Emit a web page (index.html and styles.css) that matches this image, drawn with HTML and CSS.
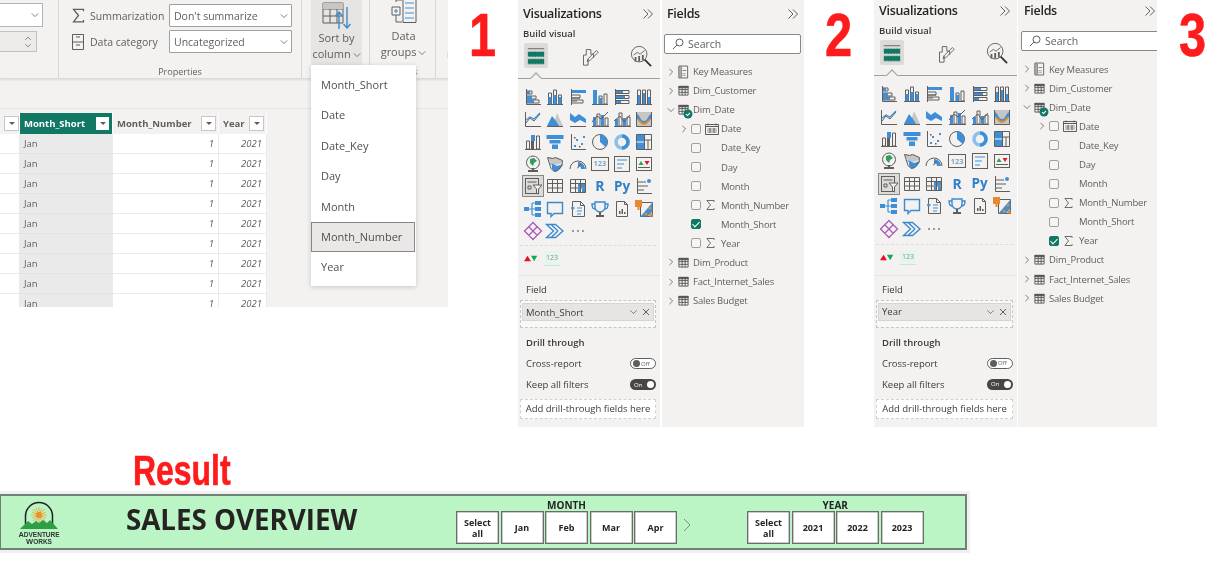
FILE: index.html
```html
<!DOCTYPE html>
<html lang="en">
<head>
<meta charset="utf-8">
<title>Sort by column</title>
<link rel="stylesheet" href="styles.css">
</head>
<body>
<svg class="defs" aria-hidden="true">
  <symbol id="i1" viewBox="0 0 20 20"><path class="l" d="M3.5 2v15.5H18"/><path class="l" d="M4 4h5v3H4M4 9h9v3H4M4 13h12v3H4"/><path class="b" d="M4 4h3v3H4zM4 9h5v3H4zM4 13h7v3H4z"/></symbol>
  <symbol id="i2" viewBox="0 0 20 20"><path class="l" d="M2 17.500h16M3.500 6h3v11h-3zM8.500 3h3v14h-3zM13.500 8h3v9h-3z"/><path class="b" d="M8.500 8h3v9h-3zM13.500 10h3v7h-3zM3.500 10h3v7h-3z"/></symbol>
  <symbol id="i3" viewBox="0 0 20 20"><path class="l" d="M3.500 2v16M4 8h8v3H4M4 13h11v3H4"/><path class="b" d="M4 3h14v3H4z"/><path class="l" d="M4 11h8M4 14h5"/></symbol>
  <symbol id="i4" viewBox="0 0 20 20"><path class="l" d="M2 17.500h16M9 9h3v8H9zM14 7h3v10h-3z"/><path class="b" d="M3 3h4v14H3zM9 11h3v6H9z"/></symbol>
  <symbol id="i5" viewBox="0 0 20 20"><path class="l" d="M3.500 2v16M4 3.500h13v3H4zM4 8.500h13v3H4zM4 13.500h13v3H4z"/><path class="b" d="M4 4h7v2H4zM4 9h9v2H4zM4 14h5v2H4z"/></symbol>
  <symbol id="i6" viewBox="0 0 20 20"><path class="l" d="M2 17.500h16M3.500 3h3v14h-3zM8.500 3h3v14h-3zM13.500 3h3v14h-3z"/><path class="b" d="M4 8h2v9H4zM9 6h2v11H9zM14 10h2v7h-2z"/></symbol>
  <symbol id="i7" viewBox="0 0 20 20"><path class="l" d="M2.500 3v14.500H18M3 14l4-5 4 3 6-7"/><path class="lb" d="M3 11l4-3 4 2 6-6"/></symbol>
  <symbol id="i8" viewBox="0 0 20 20"><path class="k2" d="M8 17l4-13 6 13z"/><path class="b" d="M2 17l5-10 4 5 3 5z"/><path class="l" d="M2 17.500h16"/></symbol>
  <symbol id="i9" viewBox="0 0 20 20"><path class="b" d="M2 4l5 4 4-3 7 5v4l-6-3-5 3-5-3z"/><path class="l" d="M2 17.500h16"/></symbol>
  <symbol id="i10" viewBox="0 0 20 20"><path class="b" d="M3 8h3v9H3zM11 6h3v11h-3z"/><path class="l" d="M7 5h3v12H7zM15 9h3v8h-3zM2 17.500h17M2 13l5-6 4 3 7-7"/></symbol>
  <symbol id="i11" viewBox="0 0 20 20"><path class="b" d="M3 10h3v7H3zM11 9h3v8h-3z"/><path class="l" d="M7 4h3v13H7zM15 8h3v9h-3zM2 17.500h17M2 12l6-5 4 6 6-7"/></symbol>
  <symbol id="i12" viewBox="0 0 20 20"><path class="k2" d="M2 3h16v15H2z"/><path class="b" d="M2 5c4 0 4 7 8 7s4-7 8-7v5c-4 0-4 5-8 5s-4-5-8-5z"/><path class="or" d="M4 10c3 1 4 4 6 4s3-3 6-4v2c-2 1-3 4-6 4s-4-3-6-4z"/><path class="l" d="M2.500 3v14.500h15V3"/></symbol>
  <symbol id="i13" viewBox="0 0 20 20"><path class="l" d="M2 17.500h16M3.500 9h3v8h-3zM13.500 4h3v13h-3z"/><path class="b" d="M8 3h4v6H8z"/><path class="k" d="M8 9h3v8H8z"/></symbol>
  <symbol id="i14" viewBox="0 0 20 20"><path class="b" d="M1.500 3h17v4h-17zM4.500 8h11v3.500h-11zM7 12.500h6V17H7z"/></symbol>
  <symbol id="i15" viewBox="0 0 20 20"><path class="l" d="M3.500 2v15.500H18"/><path class="b" d="M6 13h2v2H6zM8 7h2v2H8zM13 11h2v2h-2zM15 4h2v2h-2z"/><path class="k" d="M6 5h1.500v1.500H6zM11 14h1.500v1.500H11z"/></symbol>
  <symbol id="i16" viewBox="0 0 20 20"><circle class="l" cx="10" cy="10" r="7.500"/><path class="b" d="M10 2.500A7.500 7.500 0 0 1 15.500 15L10 10z"/></symbol>
  <symbol id="i17" viewBox="0 0 20 20"><circle class="dn" cx="10" cy="10" r="6"/><path class="dn2" d="M10 4a6 6 0 0 1 0 12"/></symbol>
  <symbol id="i18" viewBox="0 0 20 20"><path class="b" d="M2 3h8v14H2z"/><path class="l" d="M2.500 2.500h15v15h-15zM10.500 3v14M10.500 8h7M14 8v9"/><path class="w" d="M2.500 10h7.500"/></symbol>
  <symbol id="i19" viewBox="0 0 20 20"><circle class="l" cx="10" cy="8.500" r="6.500"/><path class="gn" d="M7 5l4-1 3 3-3 2-1 3-3-3z"/><path class="k" d="M5 16h10v2H5z"/><path class="k" d="M9 14h2v3H9z"/></symbol>
  <symbol id="i20" viewBox="0 0 20 20"><path class="k2" d="M3 3l5 1 3-1 6 3v3l-6 2-4-1-3-3z"/><path class="b" d="M3 9l4 2v4l3 3 5-3 3-5-6 2-4-2z"/><path class="l" d="M2.500 3.500l5 1 3-1 7 3-.5 5-4 5-4 1-3-3z"/></symbol>
  <symbol id="i21" viewBox="0 0 20 20"><path class="l" d="M2 15a8 8 0 0 1 16 0"/><path class="b" d="M10 8a7 7 0 0 1 7 7h-4a3 3 0 0 0-3-3z"/><path class="k" d="M9 14l3-4 .8.700-3 3.800z"/></symbol>
  <symbol id="i23" viewBox="0 0 20 20"><rect class="l" x="2.500" y="2.500" width="15" height="15"/><path class="lb" d="M5 6h10M5 10h7M5 14h5"/></symbol>
  <symbol id="i24" viewBox="0 0 20 20"><rect class="l" x="2.500" y="3.500" width="15" height="13"/><path class="gn" d="M4.500 11l2.500-4 2.500 4z"/><path class="rd" d="M10.500 7h5L13 11z"/><path class="l" d="M4 13.500h12"/></symbol>
  <symbol id="i25" viewBox="0 0 20 20"><rect class="l" x="2.500" y="2.500" width="13" height="15"/><path class="l" d="M4.500 6h9M5 10h3v3H5z"/><path class="sl" d="M10 9h9l-3.500 4v5l-2-1v-4z"/></symbol>
  <symbol id="i26" viewBox="0 0 20 20"><path class="l" d="M2.500 3.500h15v13h-15zM2.500 7.500h15M2.500 12h15M7.500 3.500v13M12.500 3.500v13"/></symbol>
  <symbol id="i27" viewBox="0 0 20 20"><path class="b" d="M10 8h7.500v3.500H10zM10 12.500h3v4h-3zM14 12.500h3.500v4H14z"/><path class="l" d="M2.500 3.500h15v13h-15zM2.500 7.500h15M2.500 12h15M7.500 3.500v13M12.500 3.500v13"/></symbol>
  <symbol id="i30" viewBox="0 0 20 20"><path class="l" d="M3.500 2v15.500H18M4 6h8M4 10h10M4 14h6"/><circle class="b" cx="15" cy="5" r="2"/></symbol>
  <symbol id="i31" viewBox="0 0 20 20"><path class="b" d="M1 8h5v4H1zM12 2h6v4h-6zM12 8h6v4h-6zM12 14h6v4h-6z"/><path class="lb" d="M6 10h6M9 4v12M9 4h3M9 16h3"/></symbol>
  <symbol id="i32" viewBox="0 0 20 20"><path class="lb2" d="M2.500 3.500h15v11H9l-3 3v-3H2.500z"/></symbol>
  <symbol id="i33" viewBox="0 0 20 20"><path class="l" d="M4.500 2.500h8l4 4v11h-12zM12.500 2.500v4h4"/><path class="lb" d="M6 9h1M9 9h5M9 12h5M9 15h4"/><circle class="b" cx="4.500" cy="9" r="1.500"/></symbol>
  <symbol id="i34" viewBox="0 0 20 20"><path class="lb2" d="M5 3h10v5a5 5 0 0 1-10 0zM5 5H2c0 3 1 5 3 5M15 5h3c0 3-1 5-3 5"/><path class="k" d="M9 13h2v3H9zM6 16h8v2H6z"/></symbol>
  <symbol id="i35" viewBox="0 0 20 20"><path class="l" d="M4.500 2.500h8l3 3v12h-11zM12.500 2.500v3h3"/><path class="k" d="M7 12h1.500v3H7zM9.500 10H11v5H9.500zM12 13h1.500v2H12z"/></symbol>
  <symbol id="i36" viewBox="0 0 20 20"><path class="l" d="M6.500 3.500h12v14h-12z"/><path class="b" d="M6.500 17.500l12-14v9l-5 5z"/><path class="or" d="M1 1h7v7H5.500v3h-2V8H1z"/><circle class="or" cx="16" cy="9" r="1.600"/><circle class="or" cx="12" cy="15" r="1.600"/><circle class="or" cx="17" cy="16" r="1.800"/></symbol>
  <symbol id="i37" viewBox="0 0 20 20"><path class="lp" d="M10 1.500l4.200 4.200L10 10 5.800 5.700zM10 10l4.200-4.300 4.300 4.300-4.300 4.300zM10 10l4.200 4.300L10 18.500l-4.200-4.200zM10 10l-4.200 4.300L1.500 10l4.300-4.300z"/></symbol>
  <symbol id="i38" viewBox="0 0 20 20"><path class="lb2" d="M1.500 3.500h9l7.500 6.500-7.500 6.500h-9l7-6.500zM6 3.500l7 6.500M6 16.500l7-6.500"/></symbol>
  <symbol id="i39" viewBox="0 0 20 20"><circle class="kk" cx="5" cy="10" r="1"/><circle class="kk" cx="10" cy="10" r="1"/><circle class="kk" cx="15" cy="10" r="1"/></symbol>
  <symbol id="chev" viewBox="0 0 10 10"><path class="l" d="M3 1l4 4-4 4"/></symbol>
  <symbol id="chevd" viewBox="0 0 10 10"><path class="l" d="M1 3l4 4 4-4"/></symbol>
  <symbol id="dbl" viewBox="0 0 12 10"><path class="l" d="M1.500 .5L6 5 1.500 9.500M6 .5L10.500 5 6 9.500"/></symbol>
  <symbol id="tb" viewBox="0 0 12 12"><path class="k" d="M.5 1h11v2.500H.5z"/><path class="lz" d="M1 1.500h10v9.500H1zM1 5h10M1 8h10M4.500 2v9M7.800 2v9"/></symbol>
  <symbol id="km" viewBox="0 0 12 14"><path class="k2" d="M.5 1h3v12h-3z"/><path class="l" d="M1 .5h9.500v13H1zM3.500 1v12"/><path class="k" d="M5 5h4v1H5zM5 8h1v1H5zM7 8h1v1H7zM5 10h1v1H5zM7 10h1v1H7z"/></symbol>
  <symbol id="cal" viewBox="0 0 14 12"><path class="l" d="M.5 1.500h13v10H.5zM.5 3.500h13"/><path class="k2" d="M2 5h10v5H2z"/><path class="l" d="M5 5v5M9 5v5M3 .5v2M11 .5v2"/></symbol>
  <symbol id="sg" viewBox="0 0 10 12"><path class="l" d="M9 2.500V1H1l4 5-4 5h8V9.500"/></symbol>
  <symbol id="mag" viewBox="0 0 12 12"><circle class="l" cx="7.500" cy="4.500" r="3.500"/><path class="l" d="M5 7l-4 4"/></symbol>
  <symbol id="x" viewBox="0 0 8 8"><path class="l" d="M1 1l6 6M7 1L1 7"/></symbol>
  <symbol id="tabFields" viewBox="0 0 22 22"><path class="l" d="M2 3h18"/><path class="gr" d="M2 6h18v6H2zM2 14h18v6H2z"/><path class="dots" d="M2 6h18M2 12h18M2 14h18M2 20h18"/></symbol>
  <symbol id="tabFormat" viewBox="0 0 24 24"><path class="l" d="M6 11V22h5v-7M6 11h3V5h5v5h3v4M11 15l9-9 2 2-9 9-3 1z"/></symbol>
  <symbol id="tabAnalytics" viewBox="0 0 24 24"><circle class="l" cx="10" cy="10" r="8.500"/><path class="lk" d="M16 16l7 7"/><path class="l" d="M4 11l4-3 3 2 5-4"/><path class="k" d="M5 13h2v5H5zM9 12h2v6H9zM13 11h2v6h-2z"/></symbol>
</svg>

<main class="canvas">

  <section class="shot ribbonshot">
    <div class="ribbon">
      <div class="rib-left">
        <div class="rselect"><svg class="tiny"><use href="#chevd"/></svg></div>
        <div class="spinner"><svg class="tiny up"><use href="#chevd"/></svg><svg class="tiny"><use href="#chevd"/></svg></div>
      </div>
      <div class="rib-props">
        <div class="props-grid">
          <svg class="ic-sigma"><use href="#sg"/></svg><span>Summarization</span>
          <div class="sel">Don't summarize<svg class="tiny"><use href="#chevd"/></svg></div>
          <svg class="ic-cat" viewBox="0 0 12 16"><path class="l" d="M.5.500h11v15H.5zM.5 8h11M4 3h4M4 11h4"/></svg><span>Data category</span>
          <div class="sel">Uncategorized<svg class="tiny"><use href="#chevd"/></svg></div>
        </div>
        <div class="group-label">Properties</div>
      </div>
      <div class="rib-sort">
        <div class="bigbtn hot">
          <svg class="big" viewBox="0 0 30 28"><path class="l" d="M1 1h20v20H1zM1 7h20M1 14h20M8 1v20M15 1v20"/><path class="k2" d="M1 1h20v6H1z"/><path class="lb2" d="M17 27V10M13.500 14L17 10l3.500 4M25 5v21M21.500 22l3.500 4 3.500-4"/></svg>
          <span>Sort by</span><span>column <svg class="tiny in"><use href="#chevd"/></svg></span>
        </div>
      </div>
      <div class="rib-groups">
        <div class="bigbtn">
          <svg class="big g" viewBox="0 0 28 25"><path class="l" d="M2 8h8v8H2zM6 3V1h6M6 16v7h6M13 .5h13v23H13z"/><path class="lb" d="M4 12h4M6 10v4M15 4h9M15 9h9M15 14h9M15 19h9"/></svg>
          <span>Data</span><span>groups <svg class="tiny in"><use href="#chevd"/></svg></span>
        </div>
        <div class="group-label cut">s</div>
      </div>
      <div class="rib-rest"><span class="cutchar">r</span></div>
    </div>
    <div class="subbar"></div>
    <table class="grid-table">
      <colgroup><col class="c0"><col class="c1"><col class="c2"><col class="c3"></colgroup>
      <thead>
        <tr><th><div class="th"><span></span><i class="flt"></i></div></th><th class="active"><div class="th"><span>Month_Short</span><i class="flt"></i></div></th><th><div class="th"><span>Month_Number</span><i class="flt"></i></div></th><th><div class="th"><span>Year</span><i class="flt"></i></div></th></tr>
      </thead>
      <tbody>
        <tr><td></td><td class="m">Jan</td><td class="n">1</td><td class="n">2021</td></tr>
        <tr><td></td><td class="m">Jan</td><td class="n">1</td><td class="n">2021</td></tr>
        <tr><td></td><td class="m">Jan</td><td class="n">1</td><td class="n">2021</td></tr>
        <tr><td></td><td class="m">Jan</td><td class="n">1</td><td class="n">2021</td></tr>
        <tr><td></td><td class="m">Jan</td><td class="n">1</td><td class="n">2021</td></tr>
        <tr><td></td><td class="m">Jan</td><td class="n">1</td><td class="n">2021</td></tr>
        <tr><td></td><td class="m">Jan</td><td class="n">1</td><td class="n">2021</td></tr>
        <tr><td></td><td class="m">Jan</td><td class="n">1</td><td class="n">2021</td></tr>
        <tr><td></td><td class="m">Jan</td><td class="n">1</td><td class="n">2021</td></tr>
      </tbody>
    </table>
    <ul class="menu">
      <li>Month_Short</li><li>Date</li><li>Date_Key</li><li>Day</li><li>Month</li><li class="hover">Month_Number</li><li>Year</li>
    </ul>
  </section>

  <div class="bignum n1">1</div>

  <section class="shot viz v1">
    <div class="ptitle"><span>Visualizations</span><svg class="dbl"><use href="#dbl"/></svg></div>
    <div class="psub">Build visual</div>
    <div class="tabs"><span class="tab on"><svg><use href="#tabFields"/></svg></span><svg class="tab2"><use href="#tabFormat"/></svg><svg class="tab3"><use href="#tabAnalytics"/></svg></div>
    <div class="tabline"></div>
    <div class="vgrid">
      <svg><use href="#i1"/></svg><svg><use href="#i2"/></svg><svg><use href="#i3"/></svg><svg><use href="#i4"/></svg><svg><use href="#i5"/></svg><svg><use href="#i6"/></svg>
      <svg><use href="#i7"/></svg><svg><use href="#i8"/></svg><svg><use href="#i9"/></svg><svg><use href="#i10"/></svg><svg><use href="#i11"/></svg><svg><use href="#i12"/></svg>
      <svg><use href="#i13"/></svg><svg><use href="#i14"/></svg><svg><use href="#i15"/></svg><svg><use href="#i16"/></svg><svg><use href="#i17"/></svg><svg><use href="#i18"/></svg>
      <svg><use href="#i19"/></svg><svg><use href="#i20"/></svg><svg><use href="#i21"/></svg><span class="gl card">123</span><svg><use href="#i23"/></svg><svg><use href="#i24"/></svg>
      <svg class="picked"><use href="#i25"/></svg><svg><use href="#i26"/></svg><svg><use href="#i27"/></svg><span class="gl r">R</span><span class="gl py">Py</span><svg><use href="#i30"/></svg>
      <svg><use href="#i31"/></svg><svg><use href="#i32"/></svg><svg><use href="#i33"/></svg><svg><use href="#i34"/></svg><svg><use href="#i35"/></svg><svg><use href="#i36"/></svg>
      <svg><use href="#i37"/></svg><svg><use href="#i38"/></svg><svg><use href="#i39"/></svg>
    </div>
    <div class="dashline"></div>
    <div class="custom">
      <svg viewBox="0 0 20 12" class="av"><path class="rd" d="M0 10l5-8 5 8z"/><path class="gn2" d="M10 2h9l-4.500 8z"/></svg>
      <span class="num123">123</span>
    </div>
    <div class="hline"></div>
    <div class="flabel">Field</div>
    <div class="dropzone"><div class="pill"><span>Month_Short</span><svg class="pchev"><use href="#chevd"/></svg><svg class="px"><use href="#x"/></svg></div></div>
    <div class="drill">Drill through</div>
    <div class="togrow"><span>Cross-report</span><span class="tog off"><b></b>Off</span></div>
    <div class="togrow"><span>Keep all filters</span><span class="tog on">On<b></b></span></div>
    <div class="addbox">Add drill-through fields here</div>
  </section>

  <section class="shot fields f1">
    <div class="ptitle"><span>Fields</span><svg class="dbl"><use href="#dbl"/></svg></div>
    <div class="search"><svg class="mag"><use href="#mag"/></svg>Search</div>
    <ul class="tree">
      <li class="top"><svg class="cv"><use href="#chev"/></svg><svg class="ti tall"><use href="#km"/></svg>Key Measures</li>
      <li class="top"><svg class="cv"><use href="#chev"/></svg><svg class="ti"><use href="#tb"/></svg>Dim_Customer</li>
      <li class="top"><svg class="cv"><use href="#chevd"/></svg><span class="tiw"><svg class="ti"><use href="#tb"/></svg><svg class="badge" viewBox="0 0 10 10"><circle cx="5" cy="5" r="4.500"/><path d="M3 5.200l1.500 1.300L7 3.800"/></svg></span>Dim_Date</li>
      <li class="sub"><svg class="cv"><use href="#chev"/></svg><i class="cb"></i><svg class="fi cal"><use href="#cal"/></svg>Date</li>
      <li class="sub"><span class="cv"></span><i class="cb"></i><span class="fi"></span>Date_Key</li>
      <li class="sub"><span class="cv"></span><i class="cb"></i><span class="fi"></span>Day</li>
      <li class="sub"><span class="cv"></span><i class="cb"></i><span class="fi"></span>Month</li>
      <li class="sub"><span class="cv"></span><i class="cb"></i><svg class="fi sg"><use href="#sg"/></svg>Month_Number</li>
      <li class="sub"><span class="cv"></span><i class="cb chk"></i><span class="fi"></span>Month_Short</li>
      <li class="sub"><span class="cv"></span><i class="cb"></i><svg class="fi sg"><use href="#sg"/></svg>Year</li>
      <li class="top"><svg class="cv"><use href="#chev"/></svg><svg class="ti"><use href="#tb"/></svg>Dim_Product</li>
      <li class="top"><svg class="cv"><use href="#chev"/></svg><svg class="ti"><use href="#tb"/></svg>Fact_Internet_Sales</li>
      <li class="top"><svg class="cv"><use href="#chev"/></svg><svg class="ti"><use href="#tb"/></svg>Sales Budget</li>
    </ul>
  </section>

  <div class="bignum n2">2</div>

  <section class="shot viz v2">
    <div class="ptitle"><span>Visualizations</span><svg class="dbl"><use href="#dbl"/></svg></div>
    <div class="psub">Build visual</div>
    <div class="tabs"><span class="tab on"><svg><use href="#tabFields"/></svg></span><svg class="tab2"><use href="#tabFormat"/></svg><svg class="tab3"><use href="#tabAnalytics"/></svg></div>
    <div class="tabline"></div>
    <div class="vgrid">
      <svg><use href="#i1"/></svg><svg><use href="#i2"/></svg><svg><use href="#i3"/></svg><svg><use href="#i4"/></svg><svg><use href="#i5"/></svg><svg><use href="#i6"/></svg>
      <svg><use href="#i7"/></svg><svg><use href="#i8"/></svg><svg><use href="#i9"/></svg><svg><use href="#i10"/></svg><svg><use href="#i11"/></svg><svg><use href="#i12"/></svg>
      <svg><use href="#i13"/></svg><svg><use href="#i14"/></svg><svg><use href="#i15"/></svg><svg><use href="#i16"/></svg><svg><use href="#i17"/></svg><svg><use href="#i18"/></svg>
      <svg><use href="#i19"/></svg><svg><use href="#i20"/></svg><svg><use href="#i21"/></svg><span class="gl card">123</span><svg><use href="#i23"/></svg><svg><use href="#i24"/></svg>
      <svg class="picked"><use href="#i25"/></svg><svg><use href="#i26"/></svg><svg><use href="#i27"/></svg><span class="gl r">R</span><span class="gl py">Py</span><svg><use href="#i30"/></svg>
      <svg><use href="#i31"/></svg><svg><use href="#i32"/></svg><svg><use href="#i33"/></svg><svg><use href="#i34"/></svg><svg><use href="#i35"/></svg><svg><use href="#i36"/></svg>
      <svg><use href="#i37"/></svg><svg><use href="#i38"/></svg><svg><use href="#i39"/></svg>
    </div>
    <div class="dashline"></div>
    <div class="custom">
      <svg viewBox="0 0 20 12" class="av"><path class="rd" d="M0 10l5-8 5 8z"/><path class="gn2" d="M10 2h9l-4.500 8z"/></svg>
      <span class="num123">123</span>
    </div>
    <div class="hline"></div>
    <div class="flabel">Field</div>
    <div class="dropzone"><div class="pill"><span>Year</span><svg class="pchev"><use href="#chevd"/></svg><svg class="px"><use href="#x"/></svg></div></div>
    <div class="drill">Drill through</div>
    <div class="togrow"><span>Cross-report</span><span class="tog off"><b></b>Off</span></div>
    <div class="togrow"><span>Keep all filters</span><span class="tog on">On<b></b></span></div>
    <div class="addbox">Add drill-through fields here</div>
  </section>

  <section class="shot fields f2">
    <div class="ptitle"><span>Fields</span><svg class="dbl"><use href="#dbl"/></svg></div>
    <div class="search"><svg class="mag"><use href="#mag"/></svg>Search</div>
    <ul class="tree">
      <li class="top"><svg class="cv"><use href="#chev"/></svg><svg class="ti tall"><use href="#km"/></svg>Key Measures</li>
      <li class="top"><svg class="cv"><use href="#chev"/></svg><svg class="ti"><use href="#tb"/></svg>Dim_Customer</li>
      <li class="top"><svg class="cv"><use href="#chevd"/></svg><span class="tiw"><svg class="ti"><use href="#tb"/></svg><svg class="badge" viewBox="0 0 10 10"><circle cx="5" cy="5" r="4.500"/><path d="M3 5.200l1.500 1.300L7 3.800"/></svg></span>Dim_Date</li>
      <li class="sub"><svg class="cv"><use href="#chev"/></svg><i class="cb"></i><svg class="fi cal"><use href="#cal"/></svg>Date</li>
      <li class="sub"><span class="cv"></span><i class="cb"></i><span class="fi"></span>Date_Key</li>
      <li class="sub"><span class="cv"></span><i class="cb"></i><span class="fi"></span>Day</li>
      <li class="sub"><span class="cv"></span><i class="cb"></i><span class="fi"></span>Month</li>
      <li class="sub"><span class="cv"></span><i class="cb"></i><svg class="fi sg"><use href="#sg"/></svg>Month_Number</li>
      <li class="sub"><span class="cv"></span><i class="cb"></i><span class="fi"></span>Month_Short</li>
      <li class="sub"><span class="cv"></span><i class="cb chk"></i><svg class="fi sg"><use href="#sg"/></svg>Year</li>
      <li class="top"><svg class="cv"><use href="#chev"/></svg><svg class="ti"><use href="#tb"/></svg>Dim_Product</li>
      <li class="top"><svg class="cv"><use href="#chev"/></svg><svg class="ti"><use href="#tb"/></svg>Fact_Internet_Sales</li>
      <li class="top"><svg class="cv"><use href="#chev"/></svg><svg class="ti"><use href="#tb"/></svg>Sales Budget</li>
    </ul>
  </section>

  <div class="bignum n3">3</div>

  <div class="result">Result</div>

  <section class="banner">
    <div class="logo">
      <svg viewBox="0 0 44 30" class="logo-art">
        <path class="la" d="M8.500 23V15a13.500 13.500 0 0 1 27 0v8"/>
        <path class="lr" d="M22 6v16M14 14h16M16 8l12 12M28 8L16 20M19 7l6 14M25 7l-6 14M15 11l14 6M15 17l14-6"/>
        <circle class="ls" cx="22" cy="14" r="3"/>
        <path class="lm" d="M3 28l8-8 4 3 4-3 3 2 4-3 4 3 3-3 8 9z"/>
      </svg>
      <div class="logo-t">A<small>DVENTURE</small></div>
      <div class="logo-t">W<small>ORKS</small></div>
    </div>
    <h1>SALES OVERVIEW</h1>
    <div class="slicer s-month">
      <div class="sl-title">MONTH</div>
      <div class="sl-row"><span class="sbtn">Select all</span><span class="sbtn">Jan</span><span class="sbtn">Feb</span><span class="sbtn">Mar</span><span class="sbtn">Apr</span></div>
    </div>
    <svg class="sl-next" viewBox="0 0 8 14"><path d="M1 1l6 6-6 6"/></svg>
    <div class="slicer s-year">
      <div class="sl-title">YEAR</div>
      <div class="sl-row"><span class="sbtn">Select all</span><span class="sbtn">2021</span><span class="sbtn">2022</span><span class="sbtn">2023</span></div>
    </div>
  </section>
</main>
</body>
</html>
```

FILE: styles.css
```css
* { box-sizing: border-box; }
html, body { margin: 0; padding: 0; background: #fff; }
body { font-family: "Open Sans", "Liberation Sans", sans-serif; color: #605e5c; overflow: hidden; }
ul { list-style: none; margin: 0; padding: 0; }
.defs { position: absolute; width: 0; height: 0; }

/* shared svg paint classes */
.l { fill: none; stroke: #605e5c; stroke-width: 1; }
.lz { fill: none; stroke: #555; stroke-width: 1; }
.lk { fill: none; stroke: #333; stroke-width: 2; }
.lb { fill: none; stroke: #3f8fd8; stroke-width: 1.200; }
.lb2 { fill: none; stroke: #3b8ad0; stroke-width: 1.400; }
.lp { fill: none; stroke: #a75db8; stroke-width: 1.300; }
.b { fill: #3f8fd8; }
.k { fill: #605e5c; }
.kk { fill: #807e7c; }
.k2 { fill: #c8c6c4; }
.or { fill: #e58a2e; }
.gn { fill: #2f9e5c; }
.gn2 { fill: #0fae4c; }
.rd { fill: #e8112d; }
.w { stroke: #fff; fill: none; }
.gr { fill: #117865; }
.dots { fill: none; stroke: #c8c6c4; stroke-width: 1; stroke-dasharray: 2 1; }
.sl { fill: #f3f2f1; stroke: #605e5c; stroke-width: 1; }
.dn { fill: none; stroke: #8ebfe8; stroke-width: 3.500; }
.dn2 { fill: none; stroke: #3f8fd8; stroke-width: 3.500; }

.canvas { position: relative; width: 1223px; height: 564px; overflow: hidden; }
.shot { position: absolute; background: #f3f2f1; overflow: hidden; filter: blur(.35px); }

/* big step numbers */
.bignum, .result {
  position: absolute;
  font-family: "Liberation Sans", sans-serif;
  font-weight: 700;
  color: #fe1b1b;
  line-height: 1;
  transform-origin: left top;
  -webkit-text-stroke: .6px #fe1b1b;
}
.bignum { font-size: 61px; top: 5px; transform: scaleX(.8); }
.n1 { left: 469px; }
.n2 { left: 825px; }
.n3 { left: 1179px; }
.result { left: 133px; top: 450px; font-size: 42px; transform: scaleX(.76); }

/* ribbon screenshot */
.ribbonshot { left: 0; top: 0; width: 448px; height: 307px; }
.ribbon { display: flex; height: 79px; border-bottom: 1px solid #dcdbda; box-shadow: 0 1px 2px rgba(0,0,0,.1); font-size: 10.500px; }
.ribbon > div { border-right: 1px solid #d8d7d6; height: 78px; flex: none; position: relative; }
.rib-left { width: 59px; padding-top: 3px; }
.rselect { width: 43px; height: 24px; background: #fff; border: 1px solid #b5b3b1; border-left: 0; display: flex; align-items: center; justify-content: flex-end; padding-right: 3px; }
.spinner { width: 37px; height: 21px; margin-top: 4px; background: #ecebea; border: 1px solid #c3c1bf; border-left: 0; display: flex; flex-direction: column; align-items: flex-end; padding-right: 4px; justify-content: center; }
.spinner .tiny { height: 7px; }
.spinner .up { transform: scaleY(-1); }
.tiny { width: 8px; height: 8px; flex: none; }
.tiny.in { display: inline-block; vertical-align: -1px; margin-left: -1px; }
.rib-props { width: 243px; padding: 4px 0 0 13px; }
.props-grid { display: grid; grid-template-columns: 18px 79px 123px; grid-auto-rows: 23px; row-gap: 3px; align-items: center; font-size: 10.500px; white-space: nowrap; }
.ic-sigma { width: 13px; height: 15px; }
.ic-cat { width: 12px; height: 16px; }
.sel { height: 23px; background: #fff; border: 1px solid #a19f9d; border-radius: 1px; display: flex; align-items: center; justify-content: space-between; padding: 0 3px 0 4px; }
.group-label { position: absolute; left: 0; right: 0; top: 65px; text-align: center; font-size: 9px; line-height: 14px; }
.group-label.cut { text-align: right; padding-right: 18px; }
.rib-sort { width: 68px; padding-left: 9px; }
.rib-groups { width: 66px; padding-left: 8px; }
.rib-rest { flex: 1 !important; border-right: 0 !important; }
.cutchar { position: absolute; left: 11px; top: 47px; font-size: 10px; }
.bigbtn { width: 51px; height: 65px; display: flex; flex-direction: column; align-items: center; font-size: 11px; line-height: 16px; white-space: nowrap; }
.bigbtn.hot { background: #e6e5e4; }
.big { width: 30px; height: 28px; margin: 2px 0 0; flex: none; }
.big.g { width: 28px; height: 25px; margin: -1px 0 4px; }

.subbar { height: 30px; border-bottom: 1px solid #e4e3e2; }
.grid-table { border-collapse: separate; border-spacing: 0; table-layout: fixed; width: 267px; margin-top: 4px; font-size: 9.500px; }
.c0 { width: 20px; } .c1 { width: 93px; } .c2 { width: 106px; } .c3 { width: 48px; }
.grid-table th { height: 21px; padding: 0; background: #f3f2f1; font-weight: 700; text-align: left; color: #605e5c; border-right: 1px solid #fff; }
.th { display: flex; align-items: center; justify-content: space-between; padding: 0 2px 0 4px; height: 21px; }
.flt { width: 15px; height: 15px; background: #fff; border: 1px solid #c8c6c4; flex: none; position: relative; }
.flt::after { content: ""; position: absolute; left: 3.500px; top: 5px; border: 3px solid transparent; border-top: 3px solid #605e5c; border-bottom: 0; }
th.active { background: #117865; color: #fff; }
th.active .flt { border-color: #117865; }
.grid-table td { height: 20px; padding: 0 4px; background: #fff; border-bottom: 1px solid #eaeaea; border-right: 1px solid #eaeaea; line-height: 1; }
.grid-table td.m { background: #eaeaea; border-bottom-color: #e2e2e2; }
.grid-table td.n { text-align: right; font-style: italic; }
.menu { position: absolute; left: 311px; top: 65px; width: 105px; height: 221px; background: #fff; box-shadow: 0 1px 5px rgba(0,0,0,.18); padding-top: 5px; font-size: 11px; }
.menu li { height: 30.400px; padding-left: 10px; line-height: 30px; color: #52504e; white-space: nowrap; }
.menu li.hover { background: #e9e8e7; border: 1px solid #8a8886; padding-left: 9px; line-height: 28px; margin-right: 1px; }

/* visualizations pane */
.viz { top: 0; width: 142px; height: 427px; padding-top: 5px; font-size: 9.500px; }
.v1 { left: 518px; }
.v2 { left: 874px; width: 143px; padding-top: 2px; }
.ptitle { display: flex; justify-content: space-between; align-items: center; height: 17px; padding: 0 6px 0 5px; font-size: 12.500px; font-weight: 600; color: #252423; letter-spacing: -.3px; }
.dbl { width: 12px; height: 10px; flex: none; }
.psub { margin-top: 4px; height: 16px; line-height: 16px; padding-left: 5px; font-size: 9.500px; font-weight: 600; color: #3b3a39; }
.tabs { display: flex; align-items: center; height: 25px; margin-top: 1px; padding-left: 6px; }
.tab { width: 24px; height: 25px; display: flex; align-items: center; justify-content: center; border-radius: 2px; }
.tab.on { background: #dcdbda; }
.tab svg { width: 20px; height: 20px; }
.tab2 { width: 22px; height: 22px; margin-left: 30px; }
.tab3 { width: 22px; height: 22px; margin-left: 30px; }
.tabline { position: relative; margin: 10px 0 0 0; height: 1px; background: #a19f9d; }
.tabline::after { content: ""; position: absolute; left: 14px; top: -4px; width: 7px; height: 7px; background: #f3f2f1; border-left: 1px solid #a19f9d; border-top: 1px solid #a19f9d; transform: rotate(45deg); }
.vgrid { display: grid; grid-template-columns: repeat(6, 22.250px); grid-auto-rows: 22.300px; margin-top: 7px; padding-left: 4px; place-items: center; }
.vgrid svg { width: 20px; height: 20px; display: block; }
.vgrid svg.picked { background: #dcdbda; outline: 1px solid #8a8886; outline-offset: 0; }
.v2 .vgrid { grid-template-columns: repeat(6, 22.600px); grid-auto-rows: 22.400px; margin-top: 7px; padding-left: 4px; }
.gl { display: flex; align-items: center; justify-content: center; width: 20px; height: 20px; font-weight: 700; color: #2f7fc8; line-height: 1; }
.gl.r { font-size: 14px; }
.gl.py { font-size: 13.500px; }
.gl.card { height: 14px; width: 18px; border: 1px solid #605e5c; font-size: 7.500px; color: #7fa8cc; }
.dashline { margin: 3px 4px 0 2px; border-top: 1px dashed #dedcda; }
.v2 .dashline { margin-top: 4px; }
.custom { display: flex; align-items: center; height: 16px; margin-top: 4px; padding-left: 6px; gap: 6px; }
.v2 .custom { margin-top: 5px; }
.av { width: 14px; height: 9px; }
.num123 { font-size: 7px; padding: 2px 2px; background: #e8f4ee; color: #7b9a8a; line-height: 10px; border-bottom: 1px solid #cde3d7; }
.hline { margin-top: 9px; border-top: 1px solid #e6e5e4; }
.flabel { margin-top: 6px; height: 16px; line-height: 16px; padding-left: 8px; font-size: 9.500px; color: #3b3a39; }
.dropzone { margin: 2px 4px 0 2px; height: 28px; border: 1px dashed #c8c6c4; padding: 2px 1px; background: #f8f8f7; }
.pill { height: 18px; background: #e6e5e4; border: 1px solid #d6d5d4; display: flex; align-items: center; padding: 0 3px 0 3px; font-size: 9.500px; color: #3b3a39; }
.pill span { flex: 1; }
.pchev { width: 11px; height: 8px; margin-right: 3px; }
.px { width: 8px; height: 8px; }
.drill { margin-top: 7px; height: 16px; line-height: 16px; padding-left: 8px; font-weight: 600; color: #3b3a39; }
.togrow { display: flex; align-items: center; justify-content: space-between; height: 21px; padding: 0 4px 0 8px; color: #3b3a39; }
.drill + .togrow { margin-top: 2px; }
.tog { width: 26px; height: 11px; border-radius: 6px; display: flex; align-items: center; gap: 1px; font-size: 6px; padding: 0 2px; }
.tog b { width: 7px; height: 7px; border-radius: 50%; flex: none; }
.tog.off { border: 1px solid #605e5c; background: #fff; color: #605e5c; }
.tog.off b { background: #605e5c; }
.tog.on { background: #484644; color: #fff; justify-content: space-between; padding: 0 2px 0 4px; }
.tog.on b { background: #fff; }
.addbox { margin: 4px 4px 0 2px; height: 20px; line-height: 18px; background: #fff; border: 1px dashed #d2d0ce; text-align: center; color: #3b3a39; font-size: 9.500px; white-space: nowrap; }

/* fields pane */
.fields { top: 0; height: 427px; padding-top: 5px; font-size: 9.500px; }
.f1 { left: 662px; width: 142px; }
.f2 { left: 1018px; width: 139px; padding-top: 2px; }
.f1 .ptitle { padding-right: 5px; }
.f2 .ptitle { padding-left: 6px; padding-right: 0; }
.f2 .dbl { margin-right: 1px; }
.search { display: flex; align-items: center; gap: 4px; margin: 12px 3px 0 2px; height: 20px; background: #fff; border: 1px solid #8a8886; border-radius: 2px; padding-left: 7px; font-size: 10.500px; color: #605e5c; }
.f2 .search { margin: 12px -4px 0 3px; }
.mag { width: 12px; height: 12px; flex: none; }
.tree { margin-top: 8px; letter-spacing: -.2px; }
.f2 .tree { margin-top: 8.500px; }
.tree li { height: 19.100px; display: flex; align-items: center; white-space: nowrap; color: #605e5c; }
.tree li.top { padding-left: 5px; }
.tree li.sub { padding-left: 18px; }
.f2 .tree li.sub { padding-left: 20px; }
.cv { width: 8px; height: 10px; flex: none; margin-right: 3px; display: block; }
.ti { width: 11px; height: 11px; flex: none; margin-right: 4px; display: block; }
.ti.tall { height: 14px; }
.tiw { position: relative; display: block; flex: none; width: 11px; height: 11px; margin-right: 4px; }
.badge { position: absolute; left: 5px; top: 5px; width: 10px; height: 10px; }
.badge circle { fill: #117865; }
.badge path { fill: none; stroke: #fff; stroke-width: 1.100; }
.cb { width: 10px; height: 10px; flex: none; background: #f6f5f4; border: 1px solid #a19f9d; border-radius: 2px; margin-left: 0; display: block; position: relative; }
.cb.chk { background: #117865; border-color: #117865; }
.cb.chk::after { content: ""; position: absolute; left: 2px; top: 0; width: 3px; height: 6px; border: solid #fff; border-width: 0 1px 1px 0; transform: rotate(45deg); }
.fi { width: 20px; flex: none; display: block; height: 12px; }
.fi.sg { width: 9px; margin: 0 6px 0 5px; }
.fi.cal { width: 14px; margin: 0 2px 0 4px; }

/* result banner */
.banner { position: absolute; left: 0; top: 494px; width: 967px; height: 56px; background: #bbf5c6; border: 2px solid #6f8074; box-shadow: 0 0 0 3px #f0f0f0; display: flex; align-items: center; padding-left: 15px; border-left-width: 1px; filter: blur(.3px); }
.logo { width: 46px; flex: none; text-align: center; color: #333; margin-top: 1px; }
.logo-art { display: block; width: 44px; height: 30px; margin: 0 auto; }
.la { fill: none; stroke: #222; stroke-width: 1.500; }
.lr { fill: none; stroke: #f0a030; stroke-width: .8; }
.ls { fill: #f09020; }
.lm { fill: #2f9e44; }
.logo-t { font: 700 7.500px/7px "Liberation Sans", sans-serif; color: #333; white-space: nowrap; }
.logo-t small { font-size: 6.500px; }
.banner h1 { margin: 0 0 4px 64px; width: 330px; flex: none; font-size: 27.700px; font-weight: 700; color: #252423; line-height: 1; white-space: nowrap; }
.slicer { display: flex; flex-direction: column; align-items: stretch; flex: none; margin-top: -1px; }
.sl-title { font-size: 10px; font-weight: 700; line-height: 12px; text-align: center; color: #252423; margin-bottom: 0; }
.sl-row { display: flex; gap: 1.500px; }
.sbtn { width: 43px; height: 33px; background: #fff; border: 1px solid #6b6b6b; box-shadow: inset 0 0 0 .5px #999; display: flex; align-items: center; justify-content: center; text-align: center; font-size: 9px; line-height: 11px; font-weight: 700; color: #252423; padding: 0 8px; }
.sl-next { width: 8px; height: 14px; flex: none; margin: 6px 56px 0 6px; }
.sl-next path { fill: none; stroke: #8a8886; stroke-width: 1; }
```
